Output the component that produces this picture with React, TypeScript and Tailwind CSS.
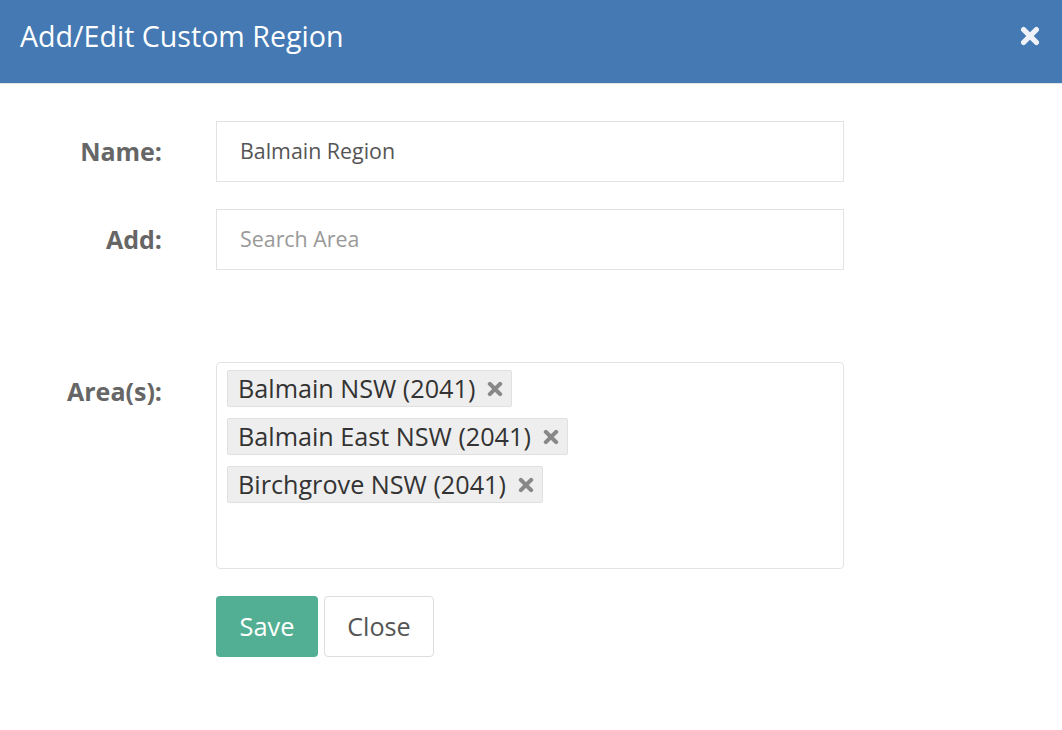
import React from "react";

const areas = ["Balmain NSW (2041)", "Balmain East NSW (2041)", "Birchgrove NSW (2041)"];

const TimesIcon = ({ className }: { className?: string }) => (
    <svg viewBox="0 0 10 10" className={className} fill="none" stroke="currentColor" strokeWidth="2.6" strokeLinecap="round">
        <path d="M1.8 1.8 L8.2 8.2 M8.2 1.8 L1.8 8.2" />
    </svg>
);

const Label = ({ children }: { children: React.ReactNode }) => (
    <div className="w-[162px] shrink-0 text-right text-[25px] font-bold text-[#666666]">{children}</div>
);

export default function App() {
    return (
        <div className="w-[1062px] h-[730px] bg-white" style={{ fontFamily: '"Open Sans", sans-serif' }}>
            <div className="h-[84px] bg-[#4479b3] border-b border-[#e5e5e5] flex items-center justify-between pl-[20px] pr-[22px]">
                <h1 className="text-[28.6px] text-white -mt-[11px]">Add/Edit Custom Region</h1>
                <TimesIcon className="w-[20px] h-[20px] text-[#eef2f8] -mt-[12px]" />
            </div>

            <div className="pt-[37px] flex flex-col">
                <div className="flex items-center">
                    <Label>Name:</Label>
                    <div className="ml-[54px] w-[628px] h-[61px] border border-[#e3e3e3] flex items-center px-[23px] text-[21.4px] text-[#555555]">
                        Balmain Region
                    </div>
                </div>

                <div className="flex items-center mt-[27px]">
                    <Label>Add:</Label>
                    <div className="ml-[54px] w-[628px] h-[61px] border border-[#e3e3e3] flex items-center px-[23px] text-[21.4px] text-[#999999]">
                        Search Area
                    </div>
                </div>

                <div className="flex items-start mt-[92px]">
                    <div className="pt-[11px]">
                        <Label>Area(s):</Label>
                    </div>
                    <div className="ml-[54px] w-[628px] h-[207px] border border-[#e3e3e3] rounded-[4px] pt-[7px] pl-[10px] flex flex-col items-start gap-[11px]">
                        {areas.map((a) => (
                            <div key={a} className="h-[37px] flex items-center bg-[#eeeeee] border border-[#e0e0e0] rounded-[2px] pl-[10px] pr-[8px] text-[25.2px] text-[#333333]">
                                <span>{a}</span>
                                <TimesIcon className="w-[16px] h-[16px] ml-[12px] text-[#888888]" />
                            </div>
                        ))}
                    </div>
                </div>

                <div className="flex mt-[27px] ml-[216px] gap-[6px]">
                    <button className="w-[102px] h-[61px] rounded-[4px] bg-[#52af93] text-white text-[25.4px]">Save</button>
                    <button className="w-[110px] h-[61px] rounded-[4px] bg-white border border-[#dddddd] text-[#555555] text-[25.2px]">Close</button>
                </div>
            </div>
        </div>
    );
}
